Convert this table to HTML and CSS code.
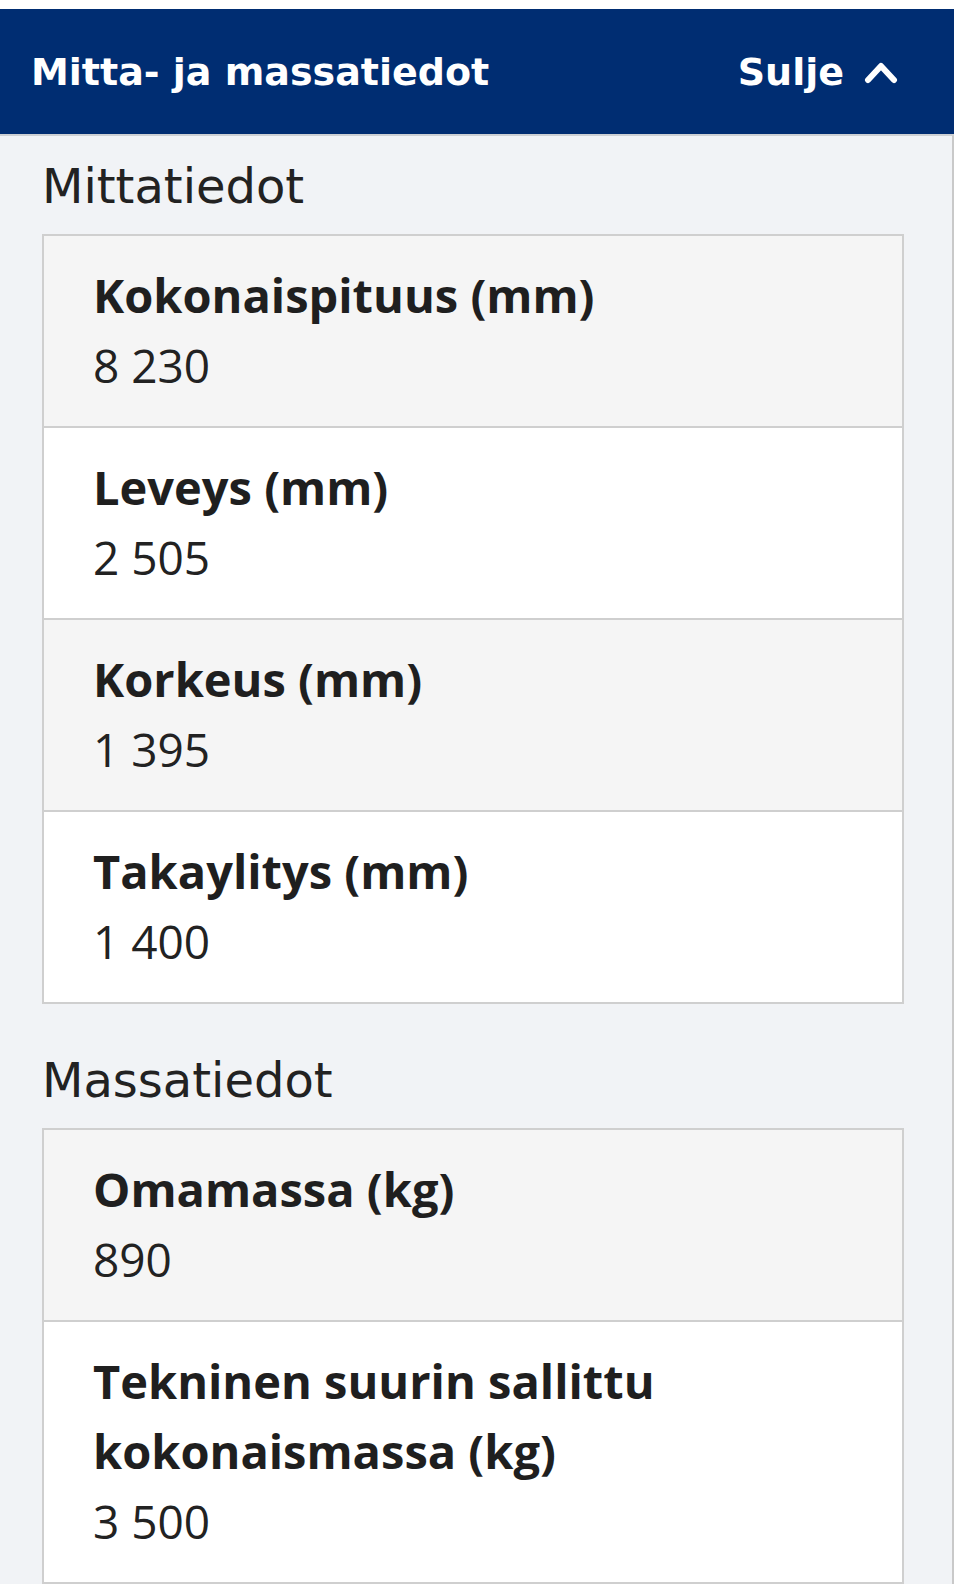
FILE: index.html
```html
<!DOCTYPE html>
<html lang="fi">
<head>
    <meta charset="UTF-8">
    <meta name="viewport" content="width=device-width, initial-scale=1.0">
    <link rel="stylesheet" href="styles.css">
</head>
<body>
    <div class="accordion">
        <div class="accordion-header">
            <h2 class="accordion-title">Mitta- ja massatiedot</h2>
            <button class="accordion-toggle">
                Sulje
                <svg class="chevron" width="34" height="24" viewBox="0 0 34 24" aria-hidden="true">
                    <polyline points="4,20 17,6 30,20" fill="none" stroke="#fff" stroke-width="6" stroke-linecap="round" stroke-linejoin="round"/>
                </svg>
            </button>
        </div>

        <div class="accordion-body">
            <h3 class="group-title">Mittatiedot</h3>
            <dl class="data-list">
                <div class="data-row">
                    <dt>Kokonaispituus (mm)</dt>
                    <dd>8 230</dd>
                </div>
                <div class="data-row">
                    <dt>Leveys (mm)</dt>
                    <dd>2 505</dd>
                </div>
                <div class="data-row">
                    <dt>Korkeus (mm)</dt>
                    <dd>1 395</dd>
                </div>
                <div class="data-row">
                    <dt>Takaylitys (mm)</dt>
                    <dd>1 400</dd>
                </div>
            </dl>

            <h3 class="group-title group-title-spaced">Massatiedot</h3>
            <dl class="data-list">
                <div class="data-row">
                    <dt>Omamassa (kg)</dt>
                    <dd>890</dd>
                </div>
                <div class="data-row">
                    <dt>Tekninen suurin sallittu kokonaismassa (kg)</dt>
                    <dd>3 500</dd>
                </div>
            </dl>
        </div>
    </div>
</body>
</html>
```

FILE: styles.css
```css
body {
    margin: 0;
    padding-top: 9px;
    background: #fff;
    font-family: "Open Sans", Arial, sans-serif;
    color: #222;
}
.accordion {
    width: 954px;
    height: 1575px;
    overflow: hidden;
}
.accordion-header {
    height: 125px;
    background-color: #002d72;
    color: #fff;
    display: flex;
    align-items: center;
    justify-content: space-between;
    padding: 0 56px 0 31px;
    font-family: "DejaVu Sans", sans-serif;
}
.accordion-title {
    margin: 0;
    font-size: 38px;
    font-weight: bold;
}
.accordion-toggle {
    display: flex;
    align-items: center;
    gap: 20px;
    padding: 0;
    border: none;
    background: none;
    color: #fff;
    font-family: inherit;
    font-size: 38px;
    font-weight: bold;
}
.chevron { display: block; }
.accordion-body {
    background-color: #f1f3f6;
    border-top: 2px solid #cdd0d4;
    border-right: 2px solid #c9c9c9;
    padding: 18px 48px 0 42px;
    height: 100%;
}
.group-title {
    margin: 0 0 16px;
    font-family: "DejaVu Sans", sans-serif;
    font-size: 48px;
    font-weight: normal;
    line-height: 64px;
    color: #222;
}
.group-title-spaced { margin-top: 44px; }
.data-list {
    margin: 0;
    border: 2px solid #cfcfcf;
}
.data-row {
    padding: 24px 48px 26px 49px;
    background: #f5f5f5;
    font-size: 46px;
    line-height: 70px;
}
.data-row + .data-row { border-top: 2px solid #cfcfcf; }
.data-row:nth-child(even) { background: #fff; }
.data-row dt {
    font-size: 47px;
    font-weight: bold;
    color: #1f1f1f;
}
.data-row dd { margin: 0; }
```
